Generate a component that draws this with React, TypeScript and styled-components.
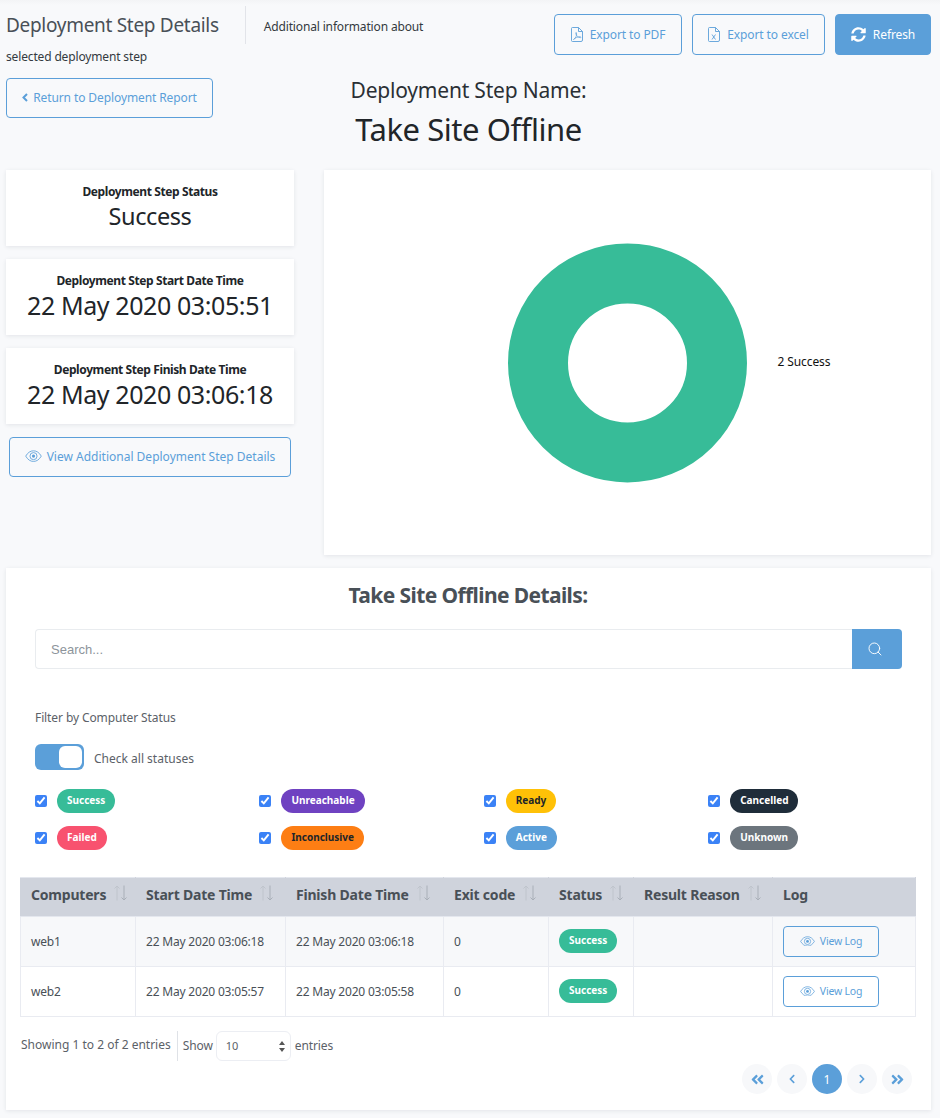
import React from 'react'
import styled, { createGlobalStyle } from 'styled-components'
import { FaChevronLeft, FaChevronRight, FaAngleDoubleLeft, FaAngleDoubleRight, FaSyncAlt } from 'react-icons/fa'
import { Search } from 'lucide-react'

const GlobalStyle = createGlobalStyle`
  * { box-sizing: border-box; }
  html, body { margin: 0; padding: 0; }
  body {
    background: #f8f9fb;
    font-family: "Noto Sans", "Open Sans", sans-serif;
    color: #212529;
  }
`

const blue = '#5b9fd9'

const selectCaret = `url("data:image/svg+xml,%3Csvg xmlns='http://www.w3.org/2000/svg' width='6' height='11'%3E%3Cpath d='M3 0l3 4H0zM3 11L0 7h6z' fill='%23555'/%3E%3C/svg%3E")`

const Page = styled.div`
  width: 940px;
  height: 1118px;
  overflow: hidden;
  padding: 6px 9px 0 6px;
  display: flex;
  flex-direction: column;
  background: linear-gradient(#f3f4f6, #f8f9fb 5px);
`

const TopRow = styled.div`
  display: flex;
  justify-content: space-between;
  height: 72px;
`

const Intro = styled.div`
  width: 430px;
  font-size: 12px;
  letter-spacing: -0.15px;
  color: #343a40;
`

const PageTitle = styled.h1`
  display: inline-block;
  margin: 0 18px 0 0;
  padding-right: 26px;
  height: 38px;
  line-height: 38px;
  border-right: 1px solid #e2e4e9;
  font-size: 19px;
  font-weight: 400;
  letter-spacing: -0.3px;
  color: #495057;
  vertical-align: top;
`

const IntroLine = styled.span`
  display: inline-block;
  line-height: 42px;
  vertical-align: top;
`

const IntroRest = styled.div`
  margin-top: -4px;
  line-height: 26px;
`

const Actions = styled.div`
  display: flex;
  gap: 10px;
  padding-top: 8px;
`

const OutlineButton = styled.button<{ $w: number; $h?: number; $small?: boolean }>`
  width: ${(p) => p.$w}px;
  height: ${(p) => p.$h ?? 40}px;
  border: 1px solid ${blue};
  border-radius: 4px;
  background: transparent;
  color: ${blue};
  font-family: inherit;
  font-size: ${(p) => (p.$small ? 10.5 : 12)}px;
  letter-spacing: ${(p) => (p.$small ? -0.2 : -0.1)}px;
  display: flex;
  align-items: center;
  justify-content: center;
  gap: ${(p) => (p.$small ? 5 : 7)}px;
  padding: 0 0 1px;
  flex: none;
`

const SolidButton = styled(OutlineButton)`
  background: ${blue};
  color: #fff;
`

const WideButton = styled(OutlineButton)`
  letter-spacing: 0;
  gap: 5px;
`

const BackButton = styled(OutlineButton)`
  gap: 5px;
`

const HeadingRow = styled.div`
  display: grid;
  grid-template-columns: 1fr auto 1fr;
  height: 92px;
`

const HeadingBlock = styled.div`
  text-align: center;
`

const HeadingLabel = styled.div`
  margin-top: -1px;
  font-size: 21px;
  line-height: 26px;
  letter-spacing: -0.2px;
  color: #2b3035;
`

const HeadingName = styled.div`
  margin-top: 1px;
  font-size: 31px;
  line-height: 50px;
  letter-spacing: -0.45px;
  color: #212529;
`

const ChartRow = styled.div`
  display: grid;
  grid-template-columns: 288px 607px;
  gap: 30px;
  height: 385px;
`

const Side = styled.div`
  display: flex;
  flex-direction: column;
  gap: 13px;
`

const Card = styled.div`
  background: #fff;
  box-shadow: 0 1px 4px rgba(40, 50, 70, 0.1);
`

const StatCard = styled(Card)`
  height: 76px;
  padding-top: 14px;
  text-align: center;
`

const StatLabel = styled.div`
  font-size: 12px;
  line-height: 16px;
  font-weight: 700;
  letter-spacing: -0.4px;
  color: #212529;
`

const StatValue = styled.div<{ $word?: boolean }>`
  margin-top: -1px;
  font-size: ${(p) => (p.$word ? 23.5 : 25)}px;
  line-height: 34px;
  letter-spacing: -0.4px;
  color: #212529;
`

const SideButton = styled.div`
  padding: 0 3px;
`

const ChartPanel = styled(Card)`
  display: grid;
  grid-template-columns: 1fr 240px 1fr;
  align-items: center;
`

const Legend = styled.div`
  padding-left: 30px;
  margin-top: -3px;
  font-size: 12px;
  letter-spacing: -0.1px;
  color: #111;
`

const DetailsCard = styled(Card)`
  margin-top: 13px;
  height: 542px;
  padding: 0 15px 0 14px;
`

const DetailsTitle = styled.h2`
  margin: 0;
  padding-top: 13px;
  height: 61px;
  text-align: center;
  font-size: 21px;
  line-height: 28px;
  font-weight: 700;
  letter-spacing: -0.6px;
  color: #495057;
`

const SearchRow = styled.div`
  display: flex;
  height: 40px;
  margin: 0 14px 0 15px;
`

const SearchInput = styled.input`
  flex: 1;
  min-width: 0;
  height: 40px;
  border: 1px solid #e9ecef;
  border-right: 0;
  border-radius: 4px 0 0 4px;
  padding: 0 15px;
  font-family: "Liberation Sans", sans-serif;
  font-size: 13px;
  outline: none;
  &::placeholder { color: #8d949b; opacity: 1; }
`

const SearchButton = styled.button`
  width: 50px;
  height: 40px;
  border: 0;
  border-radius: 0 4px 4px 0;
  background: ${blue};
  color: #fff;
  display: flex;
  align-items: center;
  justify-content: center;
  padding: 0 4px 0 0;
`

const FilterBlock = styled.div`
  margin: 0 15px;
  font-size: 12px;
  letter-spacing: -0.1px;
  color: #5b6168;
`

const FilterLabel = styled.div`
  padding-top: 40px;
  line-height: 17px;
`

const ToggleRow = styled.div`
  display: flex;
  align-items: center;
  gap: 10px;
  margin-top: 18px;
`

const ToggleLabel = styled.span`
  margin-top: 2px;
  letter-spacing: 0;
`

const Toggle = styled.div`
  width: 49px;
  height: 26px;
  border-radius: 6px;
  background: ${blue};
  padding: 2px;
  display: flex;
  justify-content: flex-end;
`

const ToggleKnob = styled.div`
  width: 23px;
  height: 22px;
  border-radius: 6px;
  background: #fff;
`

const StatusGrid = styled.div`
  display: grid;
  grid-template-columns: repeat(4, 224.4px);
  row-gap: 13px;
  margin-top: 19px;
`

const StatusItem = styled.label`
  display: flex;
  align-items: center;
  gap: 10px;
`

const Check = styled.input`
  width: 12px;
  height: 12px;
  margin: 0;
  accent-color: #3b82f6;
  flex: none;
`

const Badge = styled.span<{ $bg: string; $dark?: boolean }>`
  display: inline-block;
  height: 24px;
  padding: 0 10px;
  border-radius: 12px;
  background: ${(p) => p.$bg};
  color: ${(p) => (p.$dark ? '#212529' : '#fff')};
  font-size: 10px;
  font-weight: 700;
  line-height: 23px;
  letter-spacing: 0;
  white-space: nowrap;
  vertical-align: middle;
`

const Table = styled.table`
  width: 895px;
  margin-top: 27px;
  border-collapse: collapse;
  table-layout: fixed;
`

const Th = styled.th`
  height: 39px;
  padding: 0 10px 5px;
  background: #cfd3dc;
  border: 1px solid #e4e7ee;
  border-left-color: #cfd3dc;
  border-right-color: #cfd3dc;
  text-align: left;
  font-size: 14px;
  font-weight: 700;
  letter-spacing: -0.2px;
  color: #495057;
  white-space: nowrap;
`

const Td = styled.td`
  height: 50px;
  padding: 0 10px;
  border: 1px solid #e9ebf1;
  font-size: 12px;
  letter-spacing: -0.2px;
  color: #495057;
  white-space: nowrap;
`

const BadgeCell = styled(Td)`
  padding-bottom: 2px;
`

const Row = styled.tr<{ $odd?: boolean }>`
  background: ${(p) => (p.$odd ? '#f7f8fa' : '#fff')};
`

const HeadInner = styled.span`
  display: inline-flex;
  align-items: center;
  gap: 8px;
`

const SortIcon = styled.svg`
  margin: -4px 0 0 -1px;
`

const TableFooter = styled.div`
  display: flex;
  align-items: center;
  height: 30px;
  margin-top: 14px;
  padding-left: 1px;
  font-size: 12px;
  letter-spacing: -0.1px;
  color: #5b6168;
`

const Showing = styled.span`
  margin-top: -3px;
  padding-right: 6px;
  letter-spacing: 0;
`

const ShowBox = styled.div`
  display: flex;
  align-items: center;
  height: 30px;
  border-left: 1px solid #dfe2e7;
  padding: 0 0 2px 5px;
  gap: 3px;
`

const PageSelect = styled.select`
  appearance: none;
  width: 75px;
  height: 30px;
  margin: 2px 1px 0 0;
  border: 1px solid #eceef3;
  border-radius: 6px;
  background: #fff ${selectCaret} no-repeat right 5px center;
  padding: 0 0 2px 9px;
  font-family: inherit;
  font-size: 11px;
  color: #5b6168;
  outline: none;
`

const Pager = styled.div`
  display: flex;
  justify-content: flex-end;
  gap: 5px;
  margin-top: 3px;
  padding-right: 4px;
`

const PageDot = styled.div<{ $active?: boolean }>`
  width: 30px;
  height: 30px;
  border-radius: 50%;
  background: ${(p) => (p.$active ? blue : '#f7f8fa')};
  color: ${(p) => (p.$active ? '#fff' : blue)};
  font-size: 12px;
  display: flex;
  align-items: center;
  justify-content: center;
`

const EyeIcon = ({ size = 16 }: { size?: number }) => (
  <svg width={size} height={size * 0.72} viewBox="0 0 24 17" fill="none" stroke="currentColor" strokeWidth="1.2">
    <path d="M1 8.5C4 3.5 7.5 1 12 1s8 2.5 11 7.5C20 13.5 16.500 16 12 16S4 13.500 1 8.500Z" />
    <circle cx="12" cy="8.500" r="5" />
    <circle cx="12" cy="8.500" r="2.200" fill="currentColor" stroke="none" />
  </svg>
)

const FileIcon = ({ kind }: { kind: 'pdf' | 'xls' }) => (
  <svg width="12" height="15" viewBox="0 0 12 15" fill="none" stroke="currentColor" strokeWidth="0.9">
    <path d="M1.500.5h6l4 4v8.500a1.500 1.500 0 0 1-1.500 1.500h-8.500a1 1 0 0 1-1-1V1.500a1 1 0 0 1 1-1Z" />
    <path d="M7.500.5v4h4" />
    {kind === 'pdf' ? (
      <path d="M2.500 12.500c2-1 3.500-4 3-6.500-.3-1-1-.5-.7.700.5 2 2.500 4 4.500 4 .9 0 .9-1-.3-1-2 0-5 1.200-6.500 2.800Z" strokeWidth="0.7" />
    ) : (
      <path d="M4 7.500l3.500 5M7.500 7.500l-3.500 5" />
    )}
  </svg>
)

const BackChevron = () => (
  <svg width="6" height="9" viewBox="0 0 6 9" fill="none" stroke="currentColor" strokeWidth="2">
    <path d="M5 1 1.500 4.500 5 8" />
  </svg>
)

const SortArrows = () => (
  <SortIcon width="15" height="16" viewBox="0 0 15 16" fill="none" strokeWidth="1">
    <path d="M4 15.500V1M1.500 3.500 4 1l2.500 2.500" stroke="#bfc4cc" />
    <path d="M11 .5V15M8.500 12.500 11 15l2.500-2.500" stroke="#a9afb8" />
  </SortIcon>
)

const statuses = [
  { label: 'Success', bg: '#37bc98' },
  { label: 'Unreachable', bg: '#6f42c1' },
  { label: 'Ready', bg: '#ffc107', dark: true },
  { label: 'Cancelled', bg: '#1f2d3a' },
  { label: 'Failed', bg: '#f8526f' },
  { label: 'Inconclusive', bg: '#fd7e14', dark: true },
  { label: 'Active', bg: blue },
  { label: 'Unknown', bg: '#6c757d' },
]

const columns = [
  { label: 'Computers', width: 115, sort: true },
  { label: 'Start Date Time', width: 150, sort: true },
  { label: 'Finish Date Time', width: 158, sort: true },
  { label: 'Exit code', width: 105, sort: true },
  { label: 'Status', width: 85, sort: true },
  { label: 'Result Reason', width: 139, sort: true },
  { label: 'Log', width: 143, sort: false },
]

const rows = [
  { name: 'web1', start: '22 May 2020 03:06:18', finish: '22 May 2020 03:06:18' },
  { name: 'web2', start: '22 May 2020 03:05:57', finish: '22 May 2020 03:05:58' },
]

export default function App() {
  return (
    <Page>
      <GlobalStyle />
      <TopRow>
        <Intro>
          <PageTitle>Deployment Step Details</PageTitle>
          <IntroLine>Additional information about</IntroLine>
          <IntroRest>selected deployment step</IntroRest>
        </Intro>
        <Actions>
          <OutlineButton $w={128} $h={41}><FileIcon kind="pdf" /> Export to PDF</OutlineButton>
          <OutlineButton $w={133} $h={41}><FileIcon kind="xls" /> Export to excel</OutlineButton>
          <SolidButton $w={96} $h={41}><FaSyncAlt size={15} /> Refresh</SolidButton>
        </Actions>
      </TopRow>
      <HeadingRow>
        <div>
          <BackButton $w={207}><BackChevron /> Return to Deployment Report</BackButton>
        </div>
        <HeadingBlock>
          <HeadingLabel>Deployment Step Name:</HeadingLabel>
          <HeadingName>Take Site Offline</HeadingName>
        </HeadingBlock>
        <div />
      </HeadingRow>
      <ChartRow>
        <Side>
          <StatCard>
            <StatLabel>Deployment Step Status</StatLabel>
            <StatValue $word>Success</StatValue>
          </StatCard>
          <StatCard>
            <StatLabel>Deployment Step Start Date Time</StatLabel>
            <StatValue>22 May 2020 03:05:51</StatValue>
          </StatCard>
          <StatCard>
            <StatLabel>Deployment Step Finish Date Time</StatLabel>
            <StatValue>22 May 2020 03:06:18</StatValue>
          </StatCard>
          <SideButton>
            <WideButton $w={282}><EyeIcon size={17} /> View Additional Deployment Step Details</WideButton>
          </SideButton>
        </Side>
        <ChartPanel>
          <div />
          <svg width="240" height="240" viewBox="0 0 240 240">
            <circle cx="119.500" cy="120" r="89.500" fill="none" stroke="#37bc98" strokeWidth="60" />
          </svg>
          <Legend>2 Success</Legend>
        </ChartPanel>
      </ChartRow>
      <DetailsCard>
        <DetailsTitle>Take Site Offline Details:</DetailsTitle>
        <SearchRow>
          <SearchInput placeholder="Search..." readOnly />
          <SearchButton><Search size={16} strokeWidth={1.4} /></SearchButton>
        </SearchRow>
        <FilterBlock>
          <FilterLabel>Filter by Computer Status</FilterLabel>
          <ToggleRow>
            <Toggle><ToggleKnob /></Toggle>
            <ToggleLabel>Check all statuses</ToggleLabel>
          </ToggleRow>
          <StatusGrid>
            {statuses.map((s) => (
              <StatusItem key={s.label}>
                <Check type="checkbox" defaultChecked />
                <Badge $bg={s.bg} $dark={s.dark}>{s.label}</Badge>
              </StatusItem>
            ))}
          </StatusGrid>
        </FilterBlock>
        <Table>
          <colgroup>
            {columns.map((c) => <col key={c.label} width={c.width} />)}
          </colgroup>
          <thead>
            <tr>
              {columns.map((c) => (
                <Th key={c.label}>
                  <HeadInner>{c.label}{c.sort && <SortArrows />}</HeadInner>
                </Th>
              ))}
            </tr>
          </thead>
          <tbody>
            {rows.map((r, i) => (
              <Row key={r.name} $odd={i === 0}>
                <Td>{r.name}</Td>
                <Td>{r.start}</Td>
                <Td>{r.finish}</Td>
                <Td>0</Td>
                <BadgeCell><Badge $bg="#37bc98">Success</Badge></BadgeCell>
                <Td />
                <Td>
                  <OutlineButton $w={96} $h={31} $small><EyeIcon size={15} /> View Log</OutlineButton>
                </Td>
              </Row>
            ))}
          </tbody>
        </Table>
        <TableFooter>
          <Showing>Showing 1 to 2 of 2 entries</Showing>
          <ShowBox>
            Show
            <PageSelect defaultValue="10">
              <option>10</option>
            </PageSelect>
            entries
          </ShowBox>
        </TableFooter>
        <Pager>
          <PageDot><FaAngleDoubleLeft size={15} /></PageDot>
          <PageDot><FaChevronLeft size={10} /></PageDot>
          <PageDot $active>1</PageDot>
          <PageDot><FaChevronRight size={10} /></PageDot>
          <PageDot><FaAngleDoubleRight size={15} /></PageDot>
        </Pager>
      </DetailsCard>
    </Page>
  )
}
